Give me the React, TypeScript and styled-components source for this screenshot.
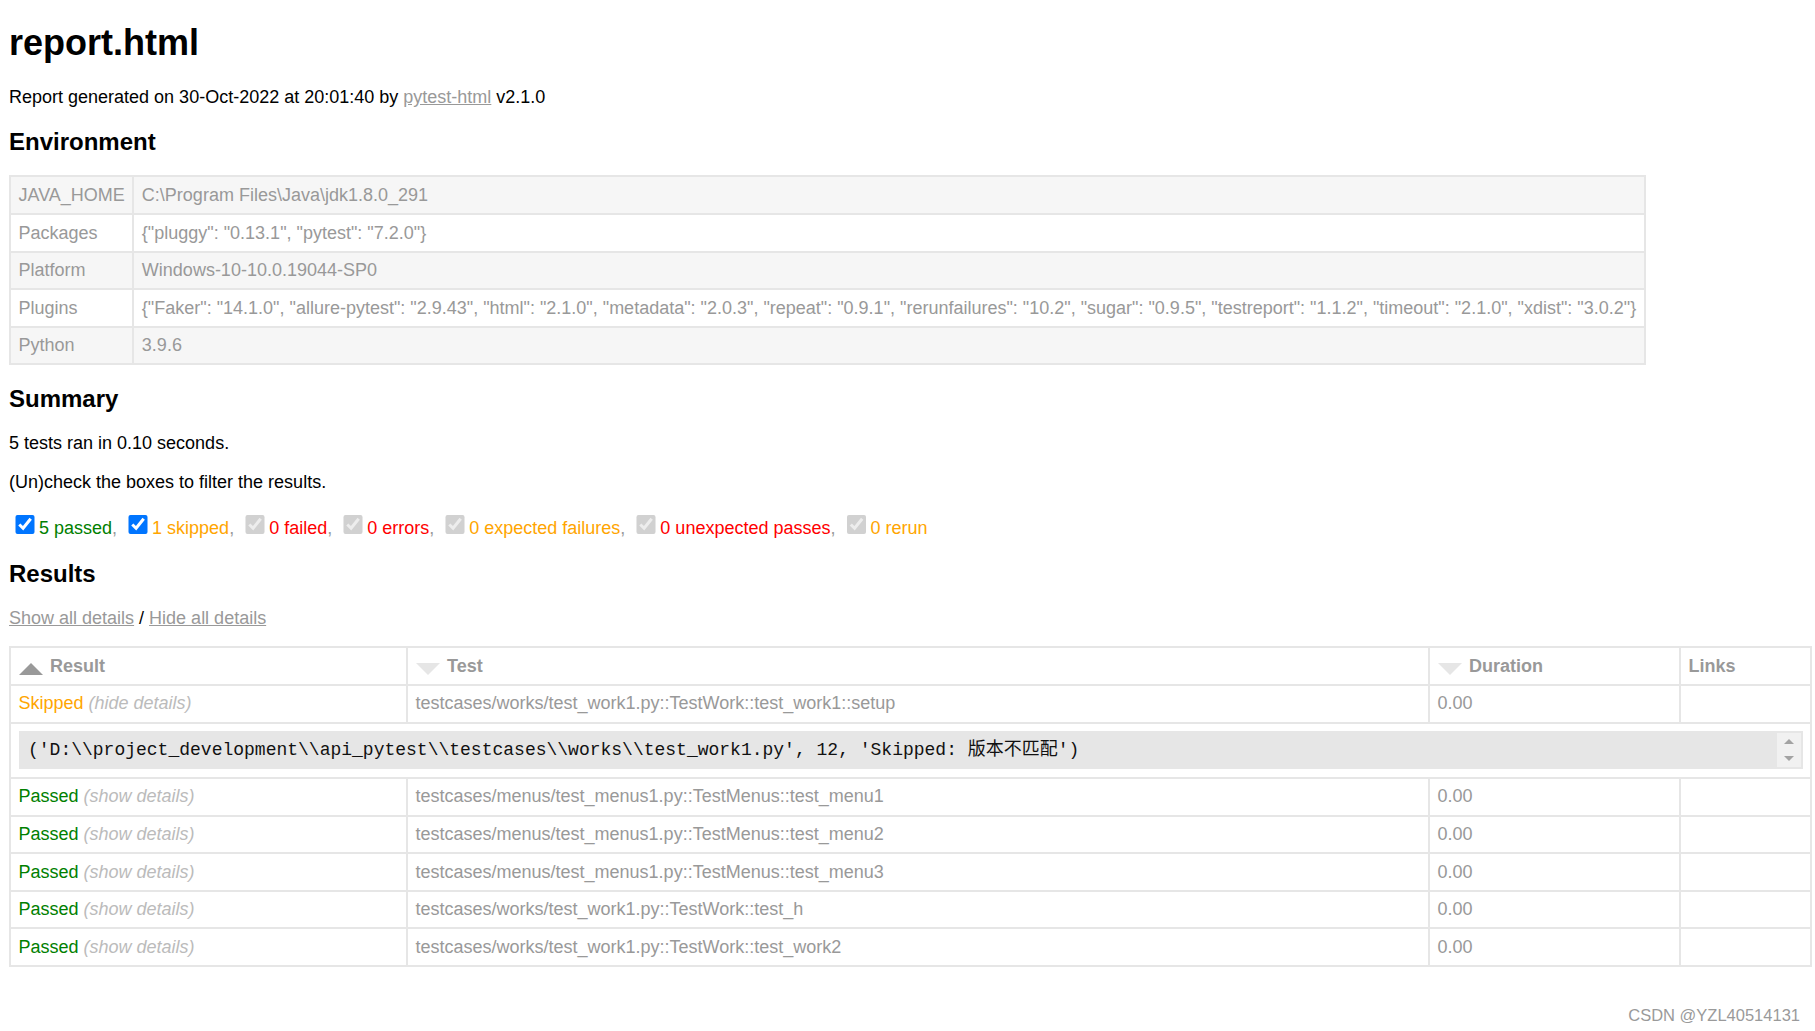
import React from "react";
import styled, { createGlobalStyle, css } from "styled-components";

const GlobalStyle = createGlobalStyle`
  html, body {
    margin: 0;
    padding: 0;
    background: #ffffff;
  }
  body {
    font-family: "Liberation Sans", Arial, Helvetica, sans-serif;
    font-size: 18px;
    color: #999999;
  }
`;

const Page = styled.div`
  position: relative;
  box-sizing: border-box;
  min-height: 100vh;
  padding: 22px 5px 1px 9px;
`;

const Title = styled.h1`
  margin: 0 0 24px;
  font-size: 36px;
  font-weight: bold;
  line-height: 41.4px;
  color: #000000;
`;

const Para = styled.p`
  margin: 18px 0;
  line-height: 20.7px;
  color: #000000;
`;

const SectionTitle = styled.h2`
  margin: 19.9px 0;
  font-size: 24px;
  font-weight: bold;
  line-height: 27.6px;
  color: #000000;
`;

const GrayLink = styled.a`
  color: #999999;
  text-decoration: underline;
  cursor: pointer;
`;

/* ---------- Environment ---------- */

const EnvTable = styled.table`
  border-collapse: collapse;
  color: #999999;
`;

const EnvRow = styled.tr`
  &:nth-child(odd) {
    background: #f6f6f6;
  }
`;

const EnvCell = styled.td`
  padding: 7.5px;
  border: 2px solid #e6e6e6;
  text-align: left;
  line-height: 20.6px;
  white-space: nowrap;
`;

/* ---------- Summary filters ---------- */

type Tone = "passed" | "skipped" | "failed";

const toneColor: Record<Tone, string> = {
  passed: "#008000",
  skipped: "#ffa500",
  failed: "#ff0000",
};

const FilterRow = styled.div`
  padding-bottom: 1.3px;
  line-height: 20.7px;
  color: #999999;
`;

const FilterBox = styled.input`
  width: 19.5px;
  height: 19.5px;
  margin: 4.5px 4.5px 4.5px 6px;
  vertical-align: baseline;
`;

const Outcome = styled.span<{ $tone: Tone }>`
  color: ${(p) => toneColor[p.$tone]};
`;

/* ---------- Results ---------- */

const ResultsTable = styled.table`
  width: 100%;
  border-collapse: collapse;
  table-layout: fixed;
  border: 2px solid #e6e6e6;
  color: #999999;
`;

const Col = styled.col<{ $w: number }>`
  width: ${(p) => p.$w}px;
`;

const HeadCell = styled.th`
  padding: 7.5px;
  border: 2px solid #e6e6e6;
  text-align: left;
  font-weight: bold;
  line-height: 20.6px;
  color: #999999;
`;

const SortIcon = styled.span<{ $active?: boolean }>`
  float: left;
  width: 0;
  height: 0;
  margin: 7.5px 7.5px 0 0;
  border-left: 12px solid transparent;
  border-right: 12px solid transparent;
  ${(p) =>
    p.$active
      ? css`
          border-bottom: 12px solid #999999;
        `
      : css`
          border-top: 12px solid #e6e6e6;
        `}
`;

const Cell = styled.td`
  padding: 7.5px;
  border: 2px solid #e6e6e6;
  text-align: left;
  vertical-align: top;
  line-height: 20.6px;
  white-space: nowrap;
  overflow: hidden;
`;

const Toggle = styled.span`
  color: #bbbbbb;
  font-style: italic;
`;

const ExtraCell = styled.td`
  padding: 7.5px;
  border: 2px solid #e6e6e6;
`;

const LogBox = styled.div`
  display: flex;
  background: #e6e6e6;
  border: 2px solid #e6e6e6;
`;

const LogText = styled.div`
  flex: 1;
  padding: 7px 7.5px;
  font-family: "Liberation Mono", "Courier New", "Noto Sans CJK SC", monospace;
  font-size: 18px;
  line-height: 20.4px;
  color: #111111;
  white-space: pre-wrap;
`;

const ScrollGutter = styled.div`
  width: 24px;
  display: flex;
  flex-direction: column;
  background: #f1f1f1;
`;

const ScrollButton = styled.div`
  flex: 1;
  display: flex;
  align-items: center;
  justify-content: center;
`;

const ScrollArrow = styled.span<{ $up?: boolean }>`
  width: 0;
  height: 0;
  border-left: 5px solid transparent;
  border-right: 5px solid transparent;
  ${(p) =>
    p.$up
      ? css`
          border-bottom: 5px solid #a3a3a3;
        `
      : css`
          border-top: 5px solid #a3a3a3;
        `}
`;

const Watermark = styled.div`
  position: absolute;
  right: 15px;
  bottom: 6px;
  font-family: "Liberation Sans", Arial, sans-serif;
  font-size: 16.5px;
  line-height: 20px;
  color: #9a9a9a;
`;

/* ---------- Data ---------- */

const environment: [string, string][] = [
  ["JAVA_HOME", "C:\\Program Files\\Java\\jdk1.8.0_291"],
  ["Packages", '{"pluggy": "0.13.1", "pytest": "7.2.0"}'],
  ["Platform", "Windows-10-10.0.19044-SP0"],
  [
    "Plugins",
    '{"Faker": "14.1.0", "allure-pytest": "2.9.43", "html": "2.1.0", "metadata": "2.0.3", "repeat": "0.9.1", "rerunfailures": "10.2", "sugar": "0.9.5", "testreport": "1.1.2", "timeout": "2.1.0", "xdist": "3.0.2"}',
  ],
  ["Python", "3.9.6"],
];

const filters: { label: string; tone: Tone; enabled: boolean }[] = [
  { label: "5 passed", tone: "passed", enabled: true },
  { label: "1 skipped", tone: "skipped", enabled: true },
  { label: "0 failed", tone: "failed", enabled: false },
  { label: "0 errors", tone: "failed", enabled: false },
  { label: "0 expected failures", tone: "skipped", enabled: false },
  { label: "0 unexpected passes", tone: "failed", enabled: false },
  { label: "0 rerun", tone: "skipped", enabled: false },
];

const passedTests = [
  "testcases/menus/test_menus1.py::TestMenus::test_menu1",
  "testcases/menus/test_menus1.py::TestMenus::test_menu2",
  "testcases/menus/test_menus1.py::TestMenus::test_menu3",
  "testcases/works/test_work1.py::TestWork::test_h",
  "testcases/works/test_work1.py::TestWork::test_work2",
];

const logLine =
  "('D:\\\\project_development\\\\api_pytest\\\\testcases\\\\works\\\\test_work1.py', 12, 'Skipped: 版本不匹配')";

export default function App() {
  return (
    <Page>
      <GlobalStyle />
      <Title>report.html</Title>
      <Para>
        Report generated on 30-Oct-2022 at 20:01:40 by <GrayLink>pytest-html</GrayLink> v2.1.0
      </Para>

      <SectionTitle>Environment</SectionTitle>
      <EnvTable>
        <tbody>
          {environment.map(([k, v]) => (
            <EnvRow key={k}>
              <EnvCell>{k}</EnvCell>
              <EnvCell>{v}</EnvCell>
            </EnvRow>
          ))}
        </tbody>
      </EnvTable>

      <SectionTitle>Summary</SectionTitle>
      <Para>5 tests ran in 0.10 seconds. </Para>
      <Para>(Un)check the boxes to filter the results.</Para>
      <FilterRow>
        {filters.map((f, i) => (
          <React.Fragment key={f.label}>
            <FilterBox type="checkbox" defaultChecked disabled={!f.enabled} />
            <Outcome $tone={f.tone}>{f.label}</Outcome>
            {i < filters.length - 1 ? ", " : ""}
          </React.Fragment>
        ))}
      </FilterRow>

      <SectionTitle>Results</SectionTitle>
      <Para>
        <GrayLink>Show all details</GrayLink> / <GrayLink>Hide all details</GrayLink>
      </Para>
      <ResultsTable>
        <colgroup>
          <Col $w={397} />
          <Col $w={1022} />
          <Col $w={251} />
          <Col $w={131} />
        </colgroup>
        <thead>
          <tr>
            <HeadCell>
              <SortIcon $active />
              Result
            </HeadCell>
            <HeadCell>
              <SortIcon />
              Test
            </HeadCell>
            <HeadCell>
              <SortIcon />
              Duration
            </HeadCell>
            <HeadCell>Links</HeadCell>
          </tr>
        </thead>
        <tbody>
          <tr>
            <Cell>
              <Outcome $tone="skipped">Skipped</Outcome>
              <Toggle> (hide details)</Toggle>
            </Cell>
            <Cell>testcases/works/test_work1.py::TestWork::test_work1::setup</Cell>
            <Cell>0.00</Cell>
            <Cell />
          </tr>
          <tr>
            <ExtraCell colSpan={4}>
              <LogBox>
                <LogText>{logLine}</LogText>
                <ScrollGutter>
                  <ScrollButton>
                    <ScrollArrow $up />
                  </ScrollButton>
                  <ScrollButton>
                    <ScrollArrow />
                  </ScrollButton>
                </ScrollGutter>
              </LogBox>
            </ExtraCell>
          </tr>
        </tbody>
        {passedTests.map((t) => (
          <tbody key={t}>
            <tr>
              <Cell>
                <Outcome $tone="passed">Passed</Outcome>
                <Toggle> (show details)</Toggle>
              </Cell>
              <Cell>{t}</Cell>
              <Cell>0.00</Cell>
              <Cell />
            </tr>
          </tbody>
        ))}
      </ResultsTable>

      <Watermark>CSDN @YZL40514131</Watermark>
    </Page>
  );
}
